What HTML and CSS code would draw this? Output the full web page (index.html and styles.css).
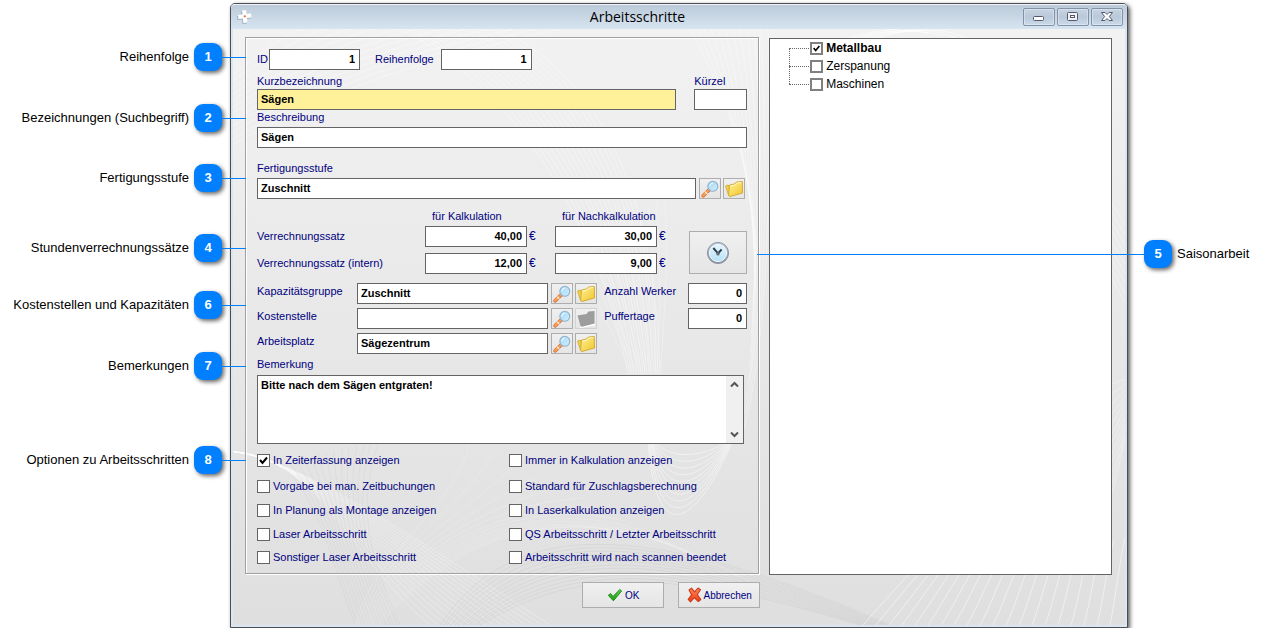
FILE: index.html
```
<!DOCTYPE html>
<html lang="de">
<head>
<meta charset="utf-8">
<title>Arbeitsschritte</title>
<link rel="stylesheet" href="styles.css">
</head>
<body>
<svg class="symbols" aria-hidden="true">
  <defs>
    <linearGradient id="lens" x1="0" y1="0" x2="1" y2="1">
      <stop offset="0" stop-color="#9fd6f5"/><stop offset="1" stop-color="#d3effc"/>
    </linearGradient>
    <linearGradient id="dial" x1="0" y1="0" x2="0" y2="1">
      <stop offset="0" stop-color="#e6f6fe"/><stop offset="1" stop-color="#b4e2f8"/>
    </linearGradient>
    <linearGradient id="rim" x1="0" y1="0" x2="0" y2="1">
      <stop offset="0" stop-color="#c3cedf"/><stop offset="1" stop-color="#8c8f98"/>
    </linearGradient>
    <linearGradient id="gold" x1="0" y1="0" x2="1" y2="1">
      <stop offset="0" stop-color="#fdf29a"/><stop offset="1" stop-color="#f2c42a"/>
    </linearGradient>
    <linearGradient id="green" x1="0" y1="0" x2="0" y2="1">
      <stop offset="0" stop-color="#5fd24a"/><stop offset="1" stop-color="#179a12"/>
    </linearGradient>
    <linearGradient id="red" x1="0" y1="0" x2="0" y2="1">
      <stop offset="0" stop-color="#ff8a5c"/><stop offset="1" stop-color="#f03a12"/>
    </linearGradient>
    <symbol id="search" viewBox="0 0 18 18">
      <path d="M2.200 15.800 8 10" stroke="#c9683a" stroke-width="3.600" stroke-linecap="round"/>
      <path d="M2.200 15.600 7.600 10.200" stroke="#ffa04c" stroke-width="2.200" stroke-linecap="round"/>
      <path d="M4 11.800 6.300 14" stroke="#fdf0e0" stroke-width="1.200"/>
      <circle cx="11.800" cy="6.300" r="5" fill="url(#lens)" stroke="#8fb0cc" stroke-width="1.100"/>
      <path d="M8.800 6.500a3.200 3.200 0 0 1 3-3.300" fill="none" stroke="#fff" stroke-width="1"/>
    </symbol>
    <symbol id="folder" viewBox="0 0 18 18">
      <path d="M.500 6 3 5l1 1 1.500 10-1.800-.500Z" fill="#f5d24c" stroke="#cfa62a" stroke-width=".8"/>
      <path d="M4.500 5 9.500 4 11.500 2 17.300 1.500 17.500 13 5 16.500 3.500 15.500Z" fill="url(#gold)" stroke="#cfa62a" stroke-width=".9"/>
      <path d="M5.300 6.200 10.200 5 12.200 3 16.300 2.600" fill="none" stroke="#fffbd6" stroke-width=".9"/>
    </symbol>
    <symbol id="folder-off" viewBox="0 0 18 18">
      <path d="M3 17.500 18 14.500" stroke="#fff" stroke-width="1.500"/>
      <path d="M.500 5.500 9.500 4 11.500 1.500 17.500 1V13.500L5 16.700 3.500 16Z" fill="#9d9d9d"/>
    </symbol>
    <symbol id="clock" viewBox="0 0 24 24">
      <circle cx="12" cy="12" r="10.600" fill="url(#rim)" stroke="#8591a6" stroke-width=".9"/>
      <circle cx="12" cy="12" r="8.600" fill="url(#dial)" stroke="#f4f8fc" stroke-width="1"/>
      <path d="M7.300 7 12 12.300 15.600 8.500" fill="none" stroke="#2b3d48" stroke-width="1.900"/>
      <circle cx="12" cy="12.800" r="1.800" fill="#666c72"/>
    </symbol>
    <symbol id="check" viewBox="0 0 16 14">
      <path d="M1.300 7.300 3.600 5.500 6 8.500 12.800 1.500 14.600 3 6.400 12.800Z" fill="url(#green)" stroke="#1d8b1b" stroke-width="1" stroke-linejoin="round"/>
    </symbol>
    <symbol id="cross" viewBox="0 0 15 16">
      <path d="M2 3 4.500 1.200 7.500 4.800 11 1 13.500 2.800 10.300 7.500 13.800 12.500 11.300 14.500 7.300 10.700 3.500 14.800 1.200 12.300 4.600 7.800Z" fill="url(#red)" stroke="#cc3a17" stroke-width="1.100" stroke-linejoin="round"/>
    </symbol>
  </defs>
</svg>

<div class="page">
  <aside class="notes">
    <div class="note">Reihenfolge <b class="pin">1</b></div>
    <div class="note">Bezeichnungen (Suchbegriff) <b class="pin">2</b></div>
    <div class="note">Fertigungsstufe <b class="pin">3</b></div>
    <div class="note">Stundenverrechnungssätze <b class="pin">4</b></div>
    <div class="note">Kostenstellen und Kapazitäten <b class="pin">6</b></div>
    <div class="note">Bemerkungen <b class="pin">7</b></div>
    <div class="note">Optionen zu Arbeitsschritten <b class="pin">8</b></div>
  </aside>

  <main class="window">
    <header class="titlebar">
      <svg class="logo" viewBox="0 0 16 16" aria-hidden="true">
        <path d="M5 2.500 9.500 1.500 10 5.500 14.500 5 15 9.500 10.500 10 11 14.500 6.500 15 6 10.500 1.500 11 1 7 5.500 6.500Z" fill="#9eb0bf"/>
        <path d="M6 1.500 10 1 10.500 5 15 4.500 15.300 8.500 11 9 11.300 13.500 7.300 14 6.800 9.500 2.500 10 2 6 6.500 5.500Z" fill="#fff"/>
        <circle cx="8.800" cy="7.300" r="1.100" fill="#ec6b2a"/>
      </svg>
      <h1 class="title">Arbeitsschritte</h1>
      <div class="controls">
        <button class="control" type="button" aria-label="Minimieren"><svg width="12" height="12" viewBox="0 0 12 12"><rect x=".5" y="5.500" width="10" height="4" rx="1" fill="#fff" stroke="#55586c"/></svg></button>
        <button class="control" type="button" aria-label="Maximieren"><svg width="12" height="12" viewBox="0 0 12 12"><rect x=".5" y="1.500" width="10" height="8" rx="1" fill="#eef2f7" stroke="#55586c"/><rect x="3.500" y="4.500" width="4" height="2" fill="#fff" stroke="#55586c"/></svg></button>
        <button class="control" type="button" aria-label="Schließen"><svg width="12" height="12" viewBox="0 0 12 12"><path d="M.500 1.500H4L6 3.500 8 1.500H11.500L8.300 5.500 11.500 9.500H8L6 7.500 4 9.500H.500L3.700 5.500Z" fill="#fff" stroke="#55586c"/></svg></button>
      </div>
    </header>

    <div class="client">
      <svg class="backdrop" id="backdrop" viewBox="233 29 892 598" preserveAspectRatio="none" aria-hidden="true"></svg>

      <form class="form">
        <div class="row">
          <label class="label" for="id">ID</label>
          <input class="input number short after-id" id="id" value="1">
          <label class="label order" for="order">Reihenfolge</label>
          <input class="input number short" id="order" value="1">
        </div>

        <div class="row name-row">
          <div class="grow">
            <label class="label" for="name">Kurzbezeichnung</label>
            <input class="input focus" id="name" value="Sägen">
          </div>
          <div class="code">
            <label class="label" for="code">Kürzel</label>
            <input class="input" id="code">
          </div>
        </div>

        <div class="stack">
          <label class="label" for="desc">Beschreibung</label>
          <input class="input" id="desc" value="Sägen">
        </div>

        <div class="stack stage">
          <label class="label" for="stage">Fertigungsstufe</label>
          <div class="lookup">
            <input class="input" id="stage" value="Zuschnitt">
            <button class="tool" type="button" aria-label="Suchen"><svg class="icon"><use href="#search"/></svg></button>
            <button class="tool" type="button" aria-label="Öffnen"><svg class="icon"><use href="#folder"/></svg></button>
          </div>
        </div>

        <div class="rates">
          <div class="rate-grid">
            <span class="label rate-head first" id="calc">für Kalkulation</span>
            <span class="label rate-head" id="post">für Nachkalkulation</span>
            <span class="label" id="rate">Verrechnungssatz</span>
            <div class="money"><input class="input number" aria-labelledby="rate calc" value="40,00"><span class="label">€</span></div>
            <div class="money"><input class="input number" aria-labelledby="rate post" value="30,00"><span class="label">€</span></div>
            <span class="label" id="intern">Verrechnungssatz (intern)</span>
            <div class="money"><input class="input number" aria-labelledby="intern calc" value="12,00"><span class="label">€</span></div>
            <div class="money"><input class="input number" aria-labelledby="intern post" value="9,00"><span class="label">€</span></div>
          </div>
          <button class="season" type="button" aria-label="Saisonarbeit"><svg class="clock"><use href="#clock"/></svg></button>
        </div>

        <div class="capacity">
          <label class="label" for="group">Kapazitätsgruppe</label>
          <div class="lookup">
            <input class="input" id="group" value="Zuschnitt">
            <button class="tool" type="button" aria-label="Suchen"><svg class="icon"><use href="#search"/></svg></button>
            <button class="tool" type="button" aria-label="Öffnen"><svg class="icon"><use href="#folder"/></svg></button>
          </div>
          <label class="label" for="workers">Anzahl Werker</label>
          <input class="input number" id="workers" value="0">

          <label class="label" for="cost">Kostenstelle</label>
          <div class="lookup">
            <input class="input" id="cost">
            <button class="tool" type="button" aria-label="Suchen"><svg class="icon"><use href="#search"/></svg></button>
            <button class="tool" type="button" aria-label="Öffnen" disabled><svg class="icon"><use href="#folder-off"/></svg></button>
          </div>
          <label class="label" for="buffer">Puffertage</label>
          <input class="input number" id="buffer" value="0">

          <label class="label" for="place">Arbeitsplatz</label>
          <div class="lookup">
            <input class="input" id="place" value="Sägezentrum">
            <button class="tool" type="button" aria-label="Suchen"><svg class="icon"><use href="#search"/></svg></button>
            <button class="tool" type="button" aria-label="Öffnen"><svg class="icon"><use href="#folder"/></svg></button>
          </div>
        </div>

        <label class="label remark-label" for="remark">Bemerkung</label>
        <div class="remark">
          <textarea class="remark-text" id="remark">Bitte nach dem Sägen entgraten!</textarea>
          <div class="scrollbar" aria-hidden="true">
            <svg width="9" height="7" viewBox="0 0 9 7"><path d="M1 5.500 4.500 2 8 5.500" fill="none" stroke="#555" stroke-width="2"/></svg>
            <svg width="9" height="7" viewBox="0 0 9 7"><path d="M1 1.500 4.500 5 8 1.500" fill="none" stroke="#555" stroke-width="2"/></svg>
          </div>
        </div>

        <div class="options">
          <label class="option"><input class="box" type="checkbox" checked>In Zeiterfassung anzeigen</label>
          <label class="option"><input class="box" type="checkbox">Immer in Kalkulation anzeigen</label>
          <label class="option"><input class="box" type="checkbox">Vorgabe bei man. Zeitbuchungen</label>
          <label class="option"><input class="box" type="checkbox">Standard für Zuschlagsberechnung</label>
          <label class="option"><input class="box" type="checkbox">In Planung als Montage anzeigen</label>
          <label class="option"><input class="box" type="checkbox">In Laserkalkulation anzeigen</label>
          <label class="option"><input class="box" type="checkbox">Laser Arbeitsschritt</label>
          <label class="option"><input class="box" type="checkbox">QS Arbeitsschritt / Letzter Arbeitsschritt</label>
          <label class="option"><input class="box" type="checkbox">Sonstiger Laser Arbeitsschritt</label>
          <label class="option"><input class="box" type="checkbox">Arbeitsschritt wird nach scannen beendet</label>
        </div>
      </form>

      <section class="list">
        <ul class="tree">
          <li class="node"><label class="node-label strong"><input class="box" type="checkbox" checked>Metallbau</label></li>
          <li class="node"><label class="node-label"><input class="box" type="checkbox">Zerspanung</label></li>
          <li class="node"><label class="node-label"><input class="box" type="checkbox">Maschinen</label></li>
        </ul>
      </section>

      <footer class="actions">
        <button class="action" type="button"><svg width="16" height="14"><use href="#check"/></svg>OK</button>
        <button class="action" type="button"><svg width="15" height="16"><use href="#cross"/></svg>Abbrechen</button>
      </footer>
    </div>
  </main>

  <aside class="notes right">
    <div class="note"><b class="pin">5</b> Saisonarbeit</div>
  </aside>
</div>
<script src="backdrop.js"></script>
</body>
</html>
```
FILE: styles.css
```
* {
  box-sizing: border-box;
}

body {
  margin: 0;
  background: #fff;
  color: #000;
  font-family: "Liberation Sans", Arial, sans-serif;
  font-size: 11px;
}

.symbols {
  position: absolute;
  width: 0;
  height: 0;
}

.page {
  display: grid;
  grid-template-columns: 230px minmax(0, 1fr) 137px;
  align-items: start;
  padding-top: 3px;
}

/* Numbered notes beside the window */
.notes {
  position: relative;
  z-index: 1;
  display: grid;
  grid-template-rows: 61px 60px 70px 57px 61px 94px 28px;
  align-items: start;
  padding: 40px 8px 0 0;
}

.note {
  display: flex;
  align-items: center;
  justify-content: flex-end;
  gap: 5px;
  font-size: 13px;
  line-height: 28px;
  white-space: nowrap;
}

.pin {
  position: relative;
  width: 28px;
  height: 28px;
  border-radius: 9px;
  background: #0080ff;
  box-shadow: 2px 2px 4px rgba(0, 0, 0, .6);
  color: #fff;
  text-align: center;
}

.pin::after {
  content: "";
  position: absolute;
  top: 14px;
  left: 100%;
  width: 24px;
  height: 1px;
  background: #0080ff;
}

.notes.right {
  grid-template-rows: 28px;
  padding: 237px 0 0 16px;
}

.right .note {
  justify-content: flex-start;
}

.right .pin::after {
  right: 100%;
  left: auto;
  width: 387px;
}

/* Window frame */
.window {
  border: 1px solid #4b4d52;
  border-radius: 5px 5px 0 0;
  background: #d9e6f3;
  box-shadow: 2px 2px 4px rgba(0, 0, 0, .65);
}

.titlebar {
  display: flex;
  align-items: center;
  height: 25px;
  padding: 0 4px 0 5px;
  border-top: 1px solid #edf2f7;
  border-radius: 4px 4px 0 0;
  background: linear-gradient(#bccbd9, #d7e4f1);
}

.logo {
  width: 16px;
  height: 16px;
}

.title {
  flex: 1;
  margin: 0;
  font: 14px/24px "Open Sans", "Noto Sans", sans-serif;
  text-align: center;
}

.controls {
  display: flex;
  gap: 2px;
}

.control {
  display: flex;
  align-items: center;
  justify-content: center;
  width: 32px;
  height: 18px;
  padding: 0;
  border: 1px solid #8292a8;
  border-radius: 2px;
  background: linear-gradient(#c6d3e1, #b9c9da 50%, #cbd9e8);
  box-shadow: inset 0 0 0 1px rgba(255, 255, 255, .35);
}

.client {
  position: relative;
  display: grid;
  grid-template-columns: minmax(0, 3fr) minmax(0, 2fr);
  column-gap: 10px;
  padding: 8px 15px 19px 14px;
}

.backdrop {
  position: absolute;
  top: 0;
  left: 2px;
  width: calc(100% - 4px);
  height: calc(100% - 2px);
  background: linear-gradient(#f2f2f2, #e9e9e9 45%, #dfdfdf);
}

/* Form */
.form,
.list,
.actions {
  position: relative;
}

.form {
  padding: 11px 11px 8px;
  border: 1px solid #a0a0a0;
  box-shadow: 1px 1px 0 #fff, inset 1px 1px 0 #fff;
}

.label {
  display: block;
  color: #000080;
  line-height: 15px;
  white-space: nowrap;
}

.input {
  display: block;
  width: 100%;
  min-width: 0;
  height: 21px;
  padding: 0 4px 2px 3px;
  border: 1px solid #646464;
  border-radius: 0;
  outline: 0;
  background: #fff;
  color: #000;
  font: bold 11px "Liberation Sans", Arial, sans-serif;
}

.number {
  text-align: right;
}

.focus {
  background: #fff09a;
}

.row {
  display: flex;
  align-items: center;
}

.short {
  width: 91px;
}

.after-id {
  margin: 0 15px 0 1px;
}

.order {
  margin-right: 7px;
}

.name-row {
  gap: 18px;
  margin-top: 4px;
}

.grow {
  flex: 1;
}

.code {
  width: 53px;
}

.stack {
  display: flex;
  flex-direction: column;
  gap: 2px;
}

.stage {
  margin-top: 13px;
}

.lookup {
  display: flex;
  gap: 2px;
  padding-right: 2px;
}

.lookup .input {
  flex: 1;
  margin-right: 1px;
}

.tool,
.season,
.action {
  display: flex;
  align-items: center;
  justify-content: center;
  padding: 0;
  border: 1px solid #adadad;
  background: linear-gradient(#f0f0f0, #e5e5e5);
}

.tool {
  flex: none;
  width: 22px;
  height: 21px;
}

.tool:disabled {
  border-color: #d2d2d2;
}

.icon {
  width: 18px;
  height: 18px;
}

.rates {
  display: flex;
  align-items: flex-end;
  justify-content: space-between;
  margin-top: 10px;
}

.rate-grid {
  display: grid;
  grid-template-columns: 168px 130px 126px;
  row-gap: 6px;
  align-items: center;
}

.rate-head {
  margin-bottom: -4px;
  padding-left: 7px;
}

.first {
  grid-column: 2;
}

.money {
  display: flex;
  align-items: center;
  gap: 2px;
}

.money .input {
  width: 102px;
}

.money .label {
  font-size: 12px;
}

.season {
  width: 58px;
  height: 43px;
}

.clock {
  width: 24px;
  height: 24px;
}

.capacity {
  display: grid;
  grid-template-columns: 100px minmax(0, 1fr) 84px 59px;
  row-gap: 4px;
  margin-top: 9px;
}

.capacity .label {
  padding-top: 1px;
}

.capacity .lookup {
  padding-right: 7px;
}

.remark-label {
  margin-top: 3px;
}

.remark {
  display: flex;
  height: 69px;
  margin: 3px 3px 0 0;
  border: 1px solid #646464;
  background: #fff;
}

.remark-text {
  flex: 1;
  padding: 2px 3px;
  border: 0;
  outline: 0;
  resize: none;
  background: none;
  color: #000;
  font: bold 11px/14px "Liberation Sans", Arial, sans-serif;
}

.scrollbar {
  display: flex;
  flex-direction: column;
  align-items: center;
  justify-content: space-between;
  width: 17px;
  padding: 5px 1px 5px 0;
  background: #f0f0f0;
}

.options {
  display: grid;
  grid-template-columns: 252px minmax(0, 1fr);
  grid-template-rows: 26px 24px 24px 23px 15px;
  align-items: start;
  margin-top: 9px;
}

.option {
  display: flex;
  align-items: center;
  gap: 3px;
  color: #000080;
  line-height: 15px;
  white-space: nowrap;
}

.box {
  appearance: none;
  flex: none;
  width: 13px;
  height: 13px;
  margin: 0;
  border: 1px solid #646464;
  background: #fff;
}

.box:checked {
  background: #fff url("data:image/svg+xml,%3Csvg xmlns='http://www.w3.org/2000/svg' viewBox='0 0 11 11'%3E%3Cpath d='M2 5 4.500 8 9 2.500' fill='none' stroke='%23000' stroke-width='2'/%3E%3C/svg%3E") center / 11px 11px;
}

/* Tree list */
.list {
  margin: 1px 0 -1px;
  border: 1px solid #646464;
  background: #fff;
}

.tree {
  margin: 0;
  padding: 0 0 0 19px;
  list-style: none;
}

.node {
  position: relative;
  padding-left: 21px;
  font-size: 12px;
  line-height: 18px;
}

.node::before {
  content: "";
  position: absolute;
  top: 9px;
  left: 0;
  width: 20px;
  border-top: 1px dotted #666;
}

.node:not(:last-child)::after {
  content: "";
  position: absolute;
  top: 9px;
  left: 0;
  height: 18px;
  border-left: 1px dotted #666;
}

.node-label {
  display: flex;
  align-items: center;
  gap: 3px;
}

.node .box {
  border: 2px solid #808080;
}

.node .box:checked {
  background-size: 9px 9px;
}

.strong {
  font-weight: bold;
}

.actions {
  grid-column: 1;
  display: flex;
  justify-content: flex-end;
  gap: 14px;
  margin: 8px -1px 0 0;
}

.action {
  gap: 2px;
  width: 82px;
  height: 26px;
  color: #000080;
  font: 10px "Liberation Sans", Arial, sans-serif;
}
```
FILE: backdrop.js
```
// Fine line sheaves behind the form. Each family blends from one cubic curve to another.
const families = [
  { n: 12, color: "#fff", alpha: 0.35, from: [233, 75, 250, 60, 270, 45, 300, 29], to: [233, 145, 330, 90, 420, 60, 560, 29] },
  { n: 16, color: "#fff", alpha: 0.35, from: [500, 29, 600, 80, 655, 190, 660, 375], to: [400, 29, 520, 90, 600, 230, 628, 375] },
  { n: 12, color: "#fff", alpha: 0.25, from: [570, 240, 590, 290, 615, 340, 632, 375], to: [665, 200, 668, 260, 665, 320, 660, 375] },
  { n: 12, color: "#fff", alpha: 0.35, from: [690, 29, 740, 120, 755, 200, 757, 260], to: [768, 29, 772, 200, 766, 350, 744, 430] },
  { n: 10, color: "#fff", alpha: 0.45, from: [648, 444, 655, 540, 690, 540, 732, 444], to: [656, 444, 670, 460, 700, 460, 725, 444] },
  { n: 16, color: "#fff", alpha: 0.3, from: [233, 453, 320, 460, 350, 560, 430, 627], to: [233, 453, 300, 462, 400, 530, 550, 627] },
  { n: 14, color: "#c8c8c8", alpha: 0.25, from: [280, 465, 320, 500, 330, 560, 355, 627], to: [380, 440, 350, 520, 380, 580, 400, 627] },
  { n: 14, color: "#fff", alpha: 0.18, from: [355, 627, 370, 560, 455, 510, 470, 444], to: [380, 627, 470, 520, 600, 490, 760, 590] },
  { n: 12, color: "#c4c4c4", alpha: 0.3, from: [440, 627, 500, 540, 600, 500, 890, 627], to: [480, 627, 560, 580, 640, 560, 860, 627] },
  { n: 20, color: "#fff", alpha: 0.5, from: [863, 627, 878, 610, 894, 592, 910, 575], to: [1110, 627, 1114, 610, 1120, 560, 1125, 540] },
  { n: 9, color: "#fff", alpha: 0.35, from: [1110, 200, 1115, 210, 1120, 218, 1125, 225], to: [1110, 275, 1115, 285, 1120, 294, 1125, 304] },
  { n: 12, color: "#fff", alpha: 0.35, from: [1110, 386, 1115, 384, 1120, 382, 1125, 380], to: [1110, 500, 1115, 485, 1120, 465, 1125, 440] },
  { n: 6, color: "#fff", alpha: 0.5, from: [840, 40, 860, 34, 880, 30, 900, 29], to: [870, 40, 920, 25, 945, 28, 970, 40] }
];

const svg = document.getElementById("backdrop");
for (const { n, color, alpha, from, to } of families) {
  for (let i = 0; i < n; i++) {
    const p = from.map((v, k) => Math.round(v + (to[k] - v) * i / (n - 1)));
    const path = document.createElementNS("http://www.w3.org/2000/svg", "path");
    path.setAttribute("d", `M${p[0]} ${p[1]}C${p.slice(2).join(" ")}`);
    path.setAttribute("fill", "none");
    path.setAttribute("stroke", color);
    path.setAttribute("stroke-opacity", alpha);
    svg.append(path);
  }
}
```
